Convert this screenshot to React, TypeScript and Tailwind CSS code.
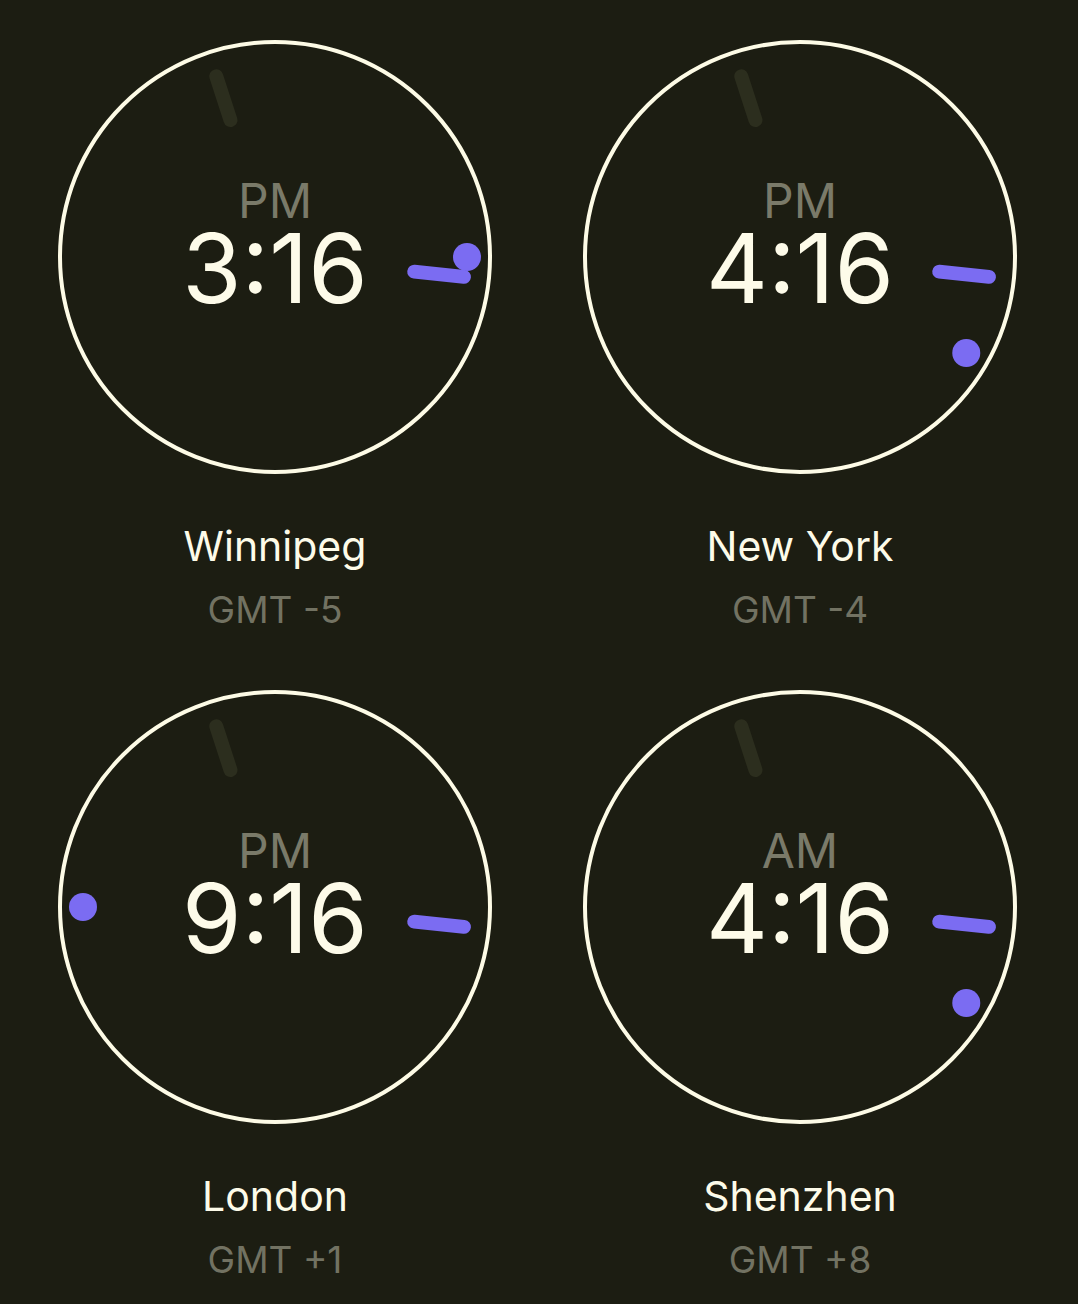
const clocks = [
  { city: 'Winnipeg', offset: 'GMT -5', period: 'PM', hour: 3, minute: 16, second: 57 },
  { city: 'New York', offset: 'GMT -4', period: 'PM', hour: 4, minute: 16, second: 57 },
  { city: 'London', offset: 'GMT +1', period: 'PM', hour: 9, minute: 16, second: 57 },
  { city: 'Shenzhen', offset: 'GMT +8', period: 'AM', hour: 4, minute: 16, second: 57 },
];

const C = 217;

function polar(r: number, deg: number) {
  const a = (deg * Math.PI) / 180;
  return { x: C + r * Math.sin(a), y: C - r * Math.cos(a) };
}

function Hands({ hour, minute, second }: { hour: number; minute: number; second: number }) {
  const s1 = polar(144, second * 6);
  const s2 = polar(190, second * 6);
  const m1 = polar(140, minute * 6);
  const m2 = polar(190, minute * 6);
  const h = polar(192, (hour % 12) * 30);
  return (
    <svg className="absolute inset-0 pointer-events-none" width="434" height="434" viewBox="0 0 434 434">
      <line x1={s1.x} y1={s1.y} x2={s2.x} y2={s2.y} stroke="#2c2e1e" strokeWidth="14" strokeLinecap="round" />
      <line x1={m1.x} y1={m1.y} x2={m2.x} y2={m2.y} stroke="#7b6cf2" strokeWidth="14" strokeLinecap="round" />
      <circle cx={h.x} cy={h.y} r="14" fill="#7b6cf2" />
    </svg>
  );
}

function Clock({ city, offset, period, hour, minute, second }: (typeof clocks)[number]) {
  return (
    <div className="flex flex-col items-center">
      <div className="relative w-[434px] h-[434px]">
        <div className="w-full h-full rounded-full border-[4px] border-[#fdfbe6] flex flex-col items-center pt-[138px]">
          <span className="text-[48px] leading-[38px] text-[#7a7a69]">{period}</span>
          <span className="text-[96px] leading-none text-[#fdfbe9]">
            {hour}:{minute}
          </span>
        </div>
        <Hands hour={hour} minute={minute} second={second} />
      </div>
      <span className="mt-[52px] text-[41px] leading-none text-[#fdfbe9]">{city}</span>
      <span className="mt-[24px] text-[37px] leading-none text-[#727262]">{offset}</span>
    </div>
  );
}

export default function App() {
  return (
    <div className="min-h-screen w-full bg-[#1c1d12] font-['Inter',sans-serif] pt-[40px] pl-[58px]">
      <div className="grid grid-cols-[434px_434px] gap-x-[91px] gap-y-[62px]">
        {clocks.map(c => (
          <Clock key={c.city} {...c} />
        ))}
      </div>
    </div>
  );
}
